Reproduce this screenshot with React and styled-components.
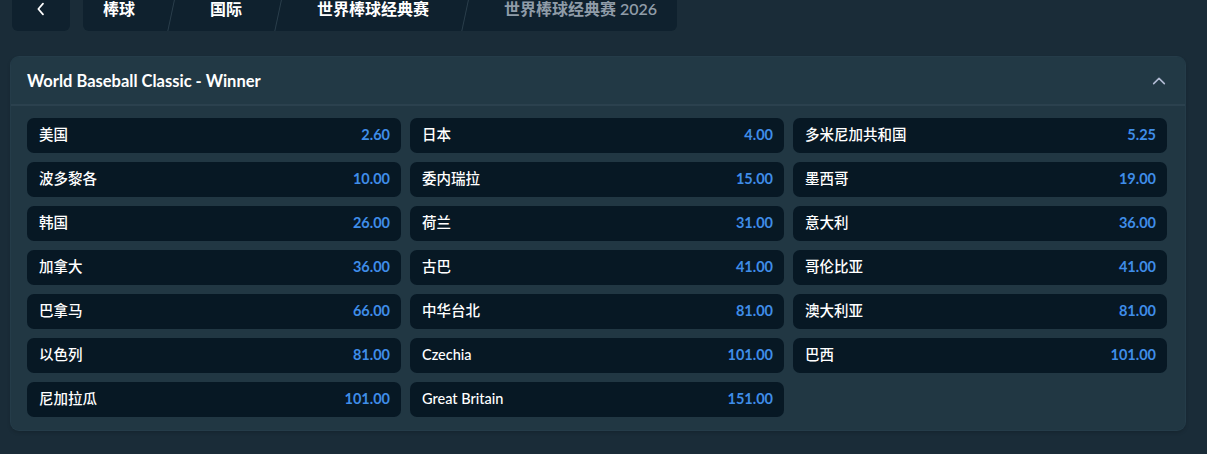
import { Fragment } from 'react';
import styled, { createGlobalStyle } from 'styled-components';

const GlobalStyle = createGlobalStyle`
    body {
        margin: 0;
        background: #1a2c38;
        font-family: Lato, "Noto Sans CJK SC", sans-serif;
        color: #ffffff;
        overflow: hidden;
    }
`
const Page = styled.div`
    padding: 0 22px 0 11px;
    height: 454px;
`
const TopBar = styled.div`
    display: flex;
    gap: 13px;
    margin-top: -13px;
    padding-left: 1px;
`
const BackButton = styled.div`
    width: 58px;
    height: 44px;
    border-radius: 6px;
    background: #0f212e;
    display: flex;
    align-items: center;
    justify-content: center;
`
const Crumbs = styled.div`
    display: flex;
    align-items: center;
    height: 44px;
    background: #0f212e;
    border-radius: 6px;
`
const Crumb = styled.span`
    padding: 0 20px;
    font-size: 16px;
    font-weight: 600;
    line-height: 44px;
    color: ${p => p.$current ? '#8f9ca8' : '#ffffff'};
    white-space: nowrap;
`
const Sep = styled.span`
    width: 35px;
    height: 44px;
    display: flex;
    justify-content: center;
    &::after {
        content: '';
        width: 1px;
        height: 100%;
        background: #2a3e4b;
        transform: skewX(-12deg);
    }
`
const Card = styled.div`
    margin-top: 26px;
    background: #213743;
    border-radius: 8px;
    box-shadow: 0 0 0 1px #253c49, 0 2px 4px rgb(0 0 0 / 20%);
    overflow: hidden;
`
const CardHeader = styled.div`
    height: 47px;
    display: flex;
    align-items: center;
    justify-content: space-between;
    padding: 0 18px 0 16px;
    background: #223945;
    border-bottom: 2px solid #2b414e;
`
const Title = styled.span`
    font-size: 16.5px;
    font-weight: 700;
`
const Grid = styled.div`
    display: grid;
    grid-template-columns: repeat(3, 374px);
    gap: 9px;
    padding: 12px 16px 13px;
`
const Outcome = styled.div`
    height: 35px;
    border-radius: 7px;
    background: #071824;
    display: flex;
    align-items: center;
    justify-content: space-between;
    padding: 0 11px 0 12px;
    font-size: 14.5px;
    line-height: 1;
`
const Name = styled.span`
    font-weight: 500;
    color: #ffffff;
`
const Odds = styled.span`
    font-weight: 700;
    color: #3f8de8;
`

const outcomes = [
    ['美国', '2.60'], ['日本', '4.00'], ['多米尼加共和国', '5.25'],
    ['波多黎各', '10.00'], ['委内瑞拉', '15.00'], ['墨西哥', '19.00'],
    ['韩国', '26.00'], ['荷兰', '31.00'], ['意大利', '36.00'],
    ['加拿大', '36.00'], ['古巴', '41.00'], ['哥伦比亚', '41.00'],
    ['巴拿马', '66.00'], ['中华台北', '81.00'], ['澳大利亚', '81.00'],
    ['以色列', '81.00'], ['Czechia', '101.00'], ['巴西', '101.00'],
    ['尼加拉瓜', '101.00'], ['Great Britain', '151.00'],
]

const crumbs = ['棒球', '国际', '世界棒球经典赛', '世界棒球经典赛 2026']

const App = () => {
    return (
        <Page>
            <GlobalStyle />
            <TopBar>
                <BackButton>
                    <svg width="16" height="16" viewBox="0 0 24 24" fill="none" stroke="#ffffff" strokeWidth="2.6" strokeLinecap="round" strokeLinejoin="round">
                        <path d="M15 4l-7 8 7 8" />
                    </svg>
                </BackButton>
                <Crumbs>
                    {crumbs.map((c, i) => (
                        <Fragment key={c}>
                            {i > 0 && <Sep />}
                            <Crumb $current={i === crumbs.length - 1}>{c}</Crumb>
                        </Fragment>
                    ))}
                </Crumbs>
            </TopBar>
            <Card>
                <CardHeader>
                    <Title>World Baseball Classic - Winner</Title>
                    <svg width="16" height="16" viewBox="0 0 24 24" fill="none" stroke="#b1bad3" strokeWidth="2.4" strokeLinecap="round" strokeLinejoin="round">
                        <path d="M4 16l8-8 8 8" />
                    </svg>
                </CardHeader>
                <Grid>
                    {outcomes.map(([name, odds]) => (
                        <Outcome key={name}>
                            <Name>{name}</Name>
                            <Odds>{odds}</Odds>
                        </Outcome>
                    ))}
                </Grid>
            </Card>
        </Page>
    )
}

export default App;
